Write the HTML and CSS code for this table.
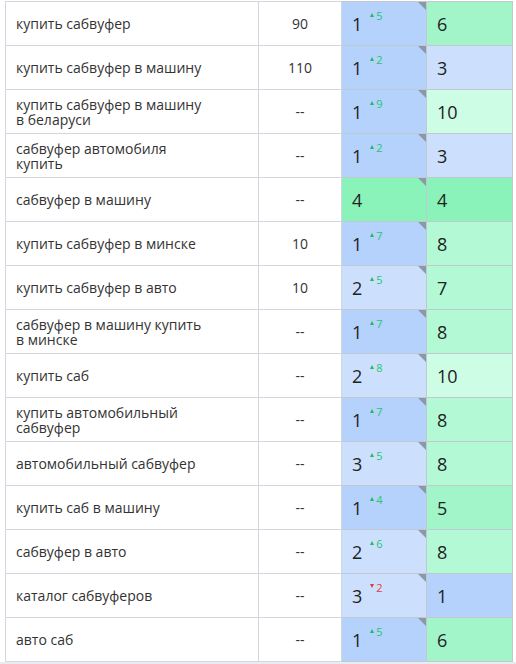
FILE: index.html
```html
<!DOCTYPE html>
<html lang="ru">
<head>
<meta charset="utf-8">
<link rel="stylesheet" href="styles.css">
</head>
<body>
<div class="wrap">
<table class="grid">
<tbody>
<tr><td class="kw">купить сабвуфер</td><td class="fr">90</td><td class="pos b1">1<sup class="up">5</sup></td><td class="v g1">6</td></tr>
<tr><td class="kw">купить сабвуфер в машину</td><td class="fr">110</td><td class="pos b1">1<sup class="up">2</sup></td><td class="v b2">3</td></tr>
<tr><td class="kw">купить сабвуфер в машину в беларуси</td><td class="fr">--</td><td class="pos b1">1<sup class="up">9</sup></td><td class="v g3">10</td></tr>
<tr><td class="kw">сабвуфер автомобиля купить</td><td class="fr">--</td><td class="pos b1">1<sup class="up">2</sup></td><td class="v b2">3</td></tr>
<tr><td class="kw">сабвуфер в машину</td><td class="fr">--</td><td class="pos g0">4</td><td class="v g0">4</td></tr>
<tr><td class="kw">купить сабвуфер в минске</td><td class="fr">10</td><td class="pos b1">1<sup class="up">7</sup></td><td class="v g2">8</td></tr>
<tr><td class="kw">купить сабвуфер в авто</td><td class="fr">10</td><td class="pos b2">2<sup class="up">5</sup></td><td class="v g2">7</td></tr>
<tr><td class="kw">сабвуфер в машину купить в минске</td><td class="fr">--</td><td class="pos b1">1<sup class="up">7</sup></td><td class="v g2">8</td></tr>
<tr><td class="kw">купить саб</td><td class="fr">--</td><td class="pos b2">2<sup class="up">8</sup></td><td class="v g3">10</td></tr>
<tr><td class="kw">купить автомобильный сабвуфер</td><td class="fr">--</td><td class="pos b1">1<sup class="up">7</sup></td><td class="v g2">8</td></tr>
<tr><td class="kw">автомобильный сабвуфер</td><td class="fr">--</td><td class="pos b2">3<sup class="up">5</sup></td><td class="v g2">8</td></tr>
<tr><td class="kw">купить саб в машину</td><td class="fr">--</td><td class="pos b1">1<sup class="up">4</sup></td><td class="v g1">5</td></tr>
<tr><td class="kw">сабвуфер в авто</td><td class="fr">--</td><td class="pos b2">2<sup class="up">6</sup></td><td class="v g2">8</td></tr>
<tr><td class="kw">каталог сабвуферов</td><td class="fr">--</td><td class="pos b2">3<sup class="down">2</sup></td><td class="v b1">1</td></tr>
<tr><td class="kw">авто саб</td><td class="fr">--</td><td class="pos b1">1<sup class="up">5</sup></td><td class="v g1">6</td></tr>
</tbody>
</table>
</div>
</body>
</html>
```

FILE: styles.css
```css
html, body {
  margin: 0;
  padding: 0;
  background: #ffffff;
}
body {
  font-family: "Open Sans", "Noto Sans", sans-serif;
  color: #2b2b2b;
}
.wrap {
  padding: 1px 3px 0 5px;
  width: 508px;
  border-bottom: 3px solid #e8ebf0;
  box-sizing: content-box;
}
.grid {
  border-collapse: collapse;
  table-layout: fixed;
  width: 508px;
}
.grid td {
  border: 1px solid #d2d7df;
  height: 43px;
  box-sizing: border-box;
  padding: 0;
  vertical-align: middle;
}
.grid tr {
  height: 44px;
}
.kw {
  width: 253px;
  font-size: 14px;
  line-height: 15px;
  padding: 0 46px 0 10px !important;
  color: #333333;
}
.fr {
  width: 83px;
  text-align: center;
  font-size: 14px;
  color: #333333;
}
.pos {
  width: 85px;
  position: relative;
  font-size: 18px;
  padding-left: 10px !important;
  color: #222222;
  border-color: #c2c8d0 !important;
}
.pos::after {
  content: "";
  position: absolute;
  top: 0;
  right: 0;
  width: 0;
  height: 0;
  border-top: 8px solid #8c98a8;
  border-left: 8px solid transparent;
}
.v {
  width: 86px;
  font-size: 18px;
  padding-left: 10px !important;
  color: #222222;
  border-color: #c2c8d0 !important;
}
sup {
  font-size: 11px;
  vertical-align: top;
  position: relative;
  top: -4px;
  margin-left: 8px;
}
.up {
  color: #1fc86a;
}
.up::before {
  content: "";
  display: inline-block;
  border-bottom: 4px solid #1fb868;
  border-left: 2px solid transparent;
  border-right: 2px solid transparent;
  margin-right: 2px;
  vertical-align: 3px;
}
.down {
  color: #ea3a3a;
}
.down::before {
  content: "";
  display: inline-block;
  border-top: 4px solid #e03a3a;
  border-left: 2px solid transparent;
  border-right: 2px solid transparent;
  margin-right: 2px;
  vertical-align: 4px;
}
.b1 { background: #b4d2fc; }
.b2 { background: #cce0fe; }
.g0 { background: #8af3b9; }
.g1 { background: #a2f5c9; }
.g2 { background: #b4f9d5; }
.g3 { background: #cdfde4; }
```
